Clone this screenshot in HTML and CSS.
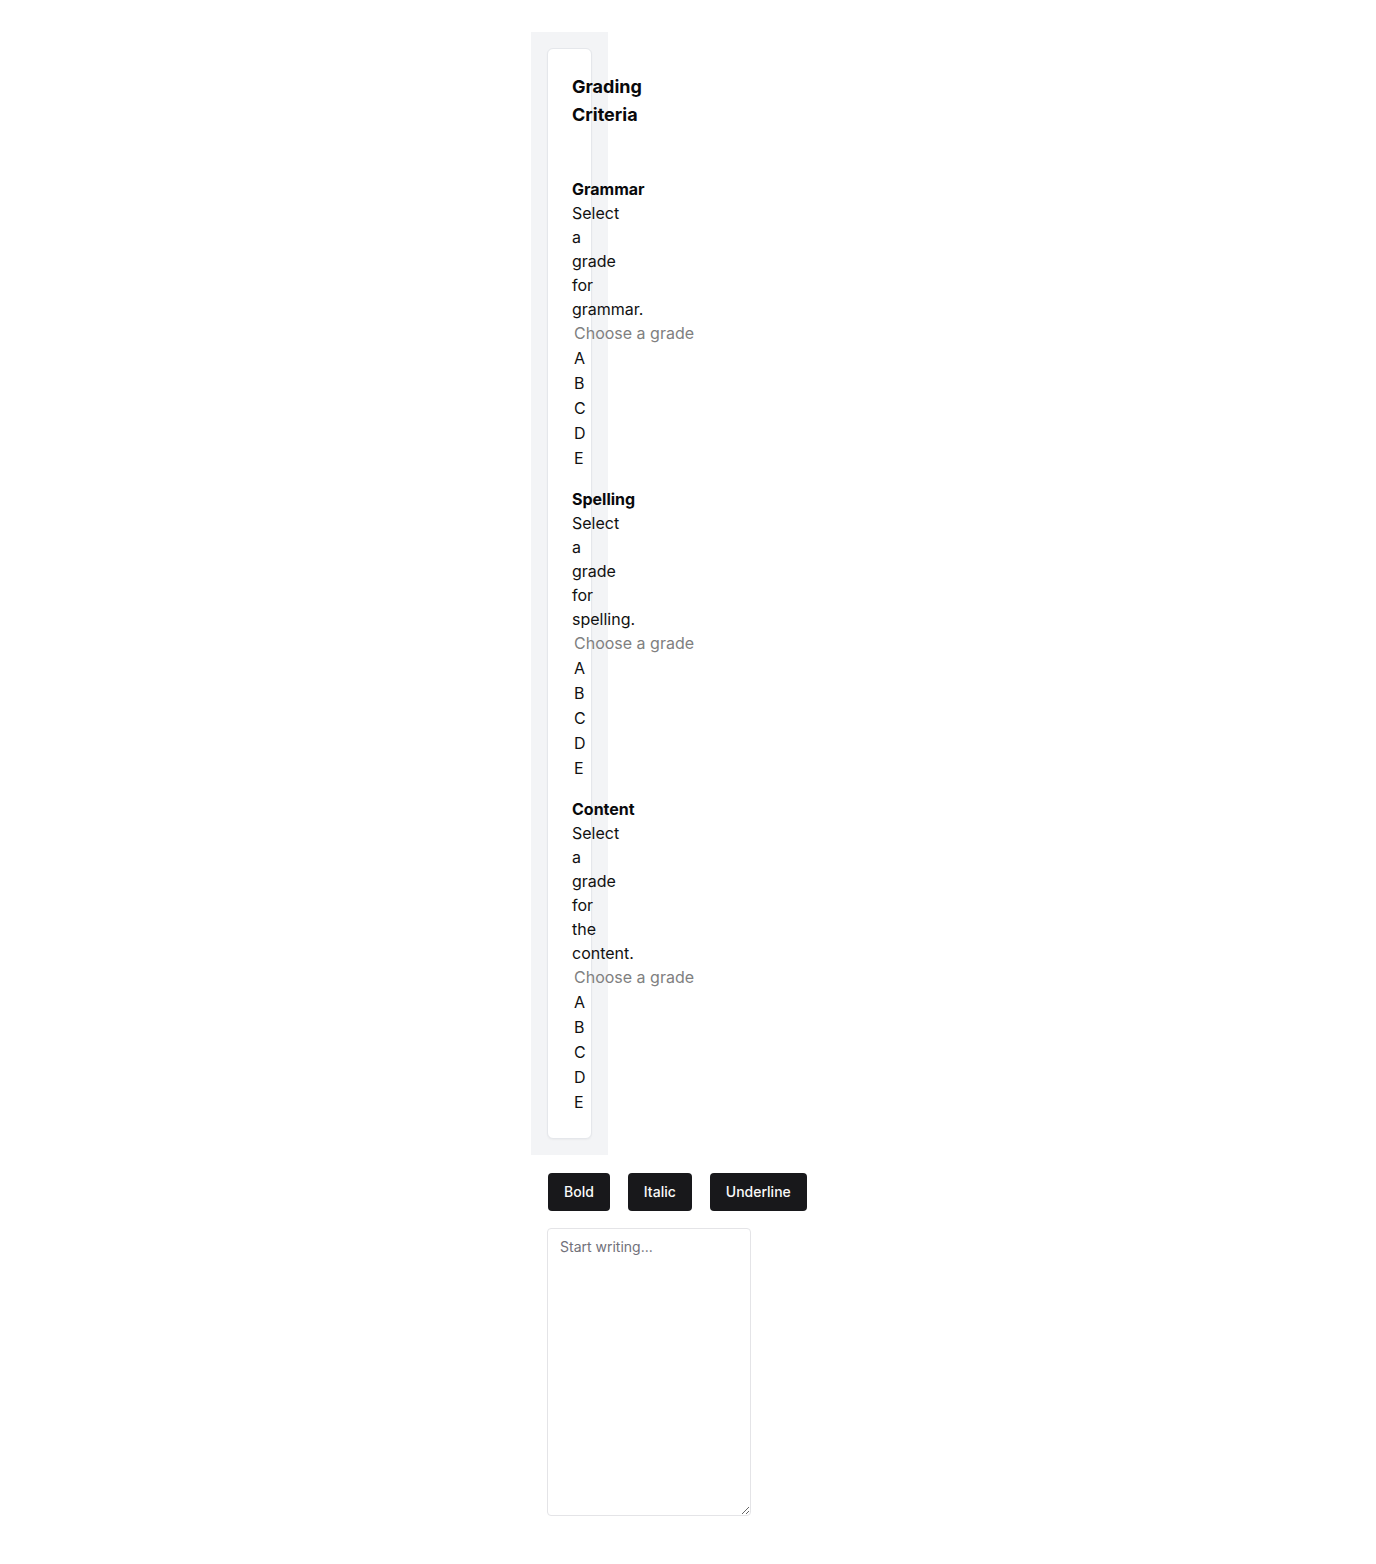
FILE: index.html
```html
<!DOCTYPE html>
<html lang="en">
<head>
<meta charset="utf-8">
<title>Grading</title>
<link rel="stylesheet" href="styles.css">
</head>
<body>
<div class="page">
  <aside class="sidebar">
    <div class="card">
      <div class="card-header">
        <h2 class="card-title">Grading Criteria</h2>
      </div>
      <div class="card-content">
        <div class="criterion">
          <div class="label">Grammar</div>
          <p class="desc">Select a grade for grammar.</p>
          <div class="listbox">
            <div class="opt placeholder">Choose a grade</div>
            <div class="opt">A</div>
            <div class="opt">B</div>
            <div class="opt">C</div>
            <div class="opt">D</div>
            <div class="opt">E</div>
          </div>
        </div>
        <div class="criterion">
          <div class="label">Spelling</div>
          <p class="desc">Select a grade for spelling.</p>
          <div class="listbox">
            <div class="opt placeholder">Choose a grade</div>
            <div class="opt">A</div>
            <div class="opt">B</div>
            <div class="opt">C</div>
            <div class="opt">D</div>
            <div class="opt">E</div>
          </div>
        </div>
        <div class="criterion">
          <div class="label">Content</div>
          <p class="desc">Select a grade for the content.</p>
          <div class="listbox">
            <div class="opt placeholder">Choose a grade</div>
            <div class="opt">A</div>
            <div class="opt">B</div>
            <div class="opt">C</div>
            <div class="opt">D</div>
            <div class="opt">E</div>
          </div>
        </div>
      </div>
    </div>
  </aside>
  <main class="editor">
    <div class="toolbar">
      <button class="btn" type="button">Bold</button>
      <button class="btn" type="button">Italic</button>
      <button class="btn" type="button">Underline</button>
    </div>
    <textarea class="textarea" placeholder="Start writing..."></textarea>
  </main>
</div>
</body>
</html>
```
FILE: styles.css
```css
* { box-sizing: border-box; }
html, body { margin: 0; padding: 0; background: #fff; }
body {
  font-family: Inter, "Noto Sans", sans-serif;
  color: #09090b;
}
.page {
  width: 314px;
  margin: 0 auto;
  padding-top: 32px;
  padding-bottom: 40px;
}
.sidebar {
  width: 77px;
  background: #f3f4f6;
  padding: 16px;
}
.card {
  width: 45px;
  background: #fff;
  border: 1px solid #e5e7eb;
  border-radius: 6px;
  box-shadow: 0 1px 2px rgba(0,0,0,0.04);
}
.card-header {
  padding: 24px 24px 48px 24px;
}
.card-title {
  margin: 0;
  font-size: 18px;
  line-height: 28px;
  font-weight: 700;
  color: #09090b;
}
.card-content {
  padding: 0 24px 23px 24px;
  display: flex;
  flex-direction: column;
  gap: 16px;
}
.criterion {
  width: 0;
}
.label {
  font-size: 16px;
  line-height: 24px;
  font-weight: 700;
  color: #09090b;
}
.desc {
  margin: 0;
  font-size: 16px;
  line-height: 24px;
  color: #111;
}
.listbox {
  width: 0;
}
.opt {
  font-size: 16px;
  line-height: 25px;
  padding: 0 2px;
  white-space: nowrap;
  color: #111;
}
.opt.placeholder {
  color: #808080;
}
.editor {
  padding: 18px 16px 0 17px;
}
.toolbar {
  display: flex;
  gap: 18px;
  margin-bottom: 17px;
}
.btn {
  font-family: Inter, "Noto Sans", sans-serif;
  font-size: 14px;
  font-weight: 500;
  line-height: 20px;
  color: #fafafa;
  background: #18181b;
  border: none;
  border-radius: 4px;
  height: 38px;
  padding: 0 16px;
}
.textarea {
  display: block;
  margin-left: -1px;
  width: 204px;
  height: 288px;
  border: 1px solid #e4e4e7;
  border-radius: 4px;
  padding: 8px 12px;
  font-family: Inter, "Noto Sans", sans-serif;
  font-size: 14px;
  line-height: 20px;
  color: #09090b;
  background: #fff;
}
.textarea::placeholder {
  color: #71717a;
}
```
